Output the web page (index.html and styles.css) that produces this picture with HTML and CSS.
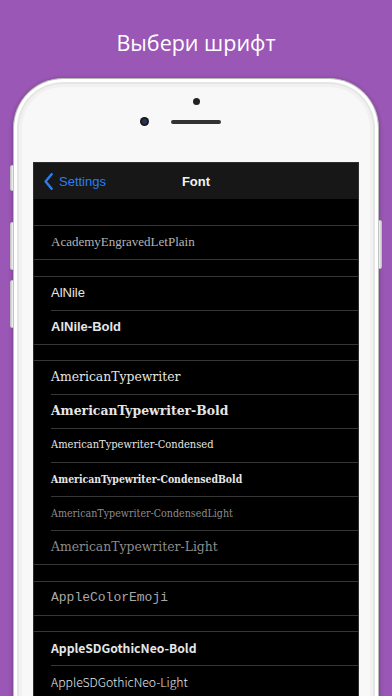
FILE: index.html
```html
<!DOCTYPE html>
<html lang="ru">
  <head>
    <meta charset="UTF-8" />
    <meta name="viewport" content="width=device-width, initial-scale=1.0" />
    <title>Выбери шрифт</title>
    <link rel="stylesheet" href="styles.css">
  </head>

  <body>
    <h1 class="title">Выбери шрифт</h1>

    <div class="phone">
      <!-- боковые кнопки -->
      <span class="side-btn mute"></span>
      <span class="side-btn vol-up"></span>
      <span class="side-btn vol-down"></span>
      <span class="side-btn power"></span>

      <div class="phone-top">
        <div class="sensor"></div>
        <div class="lens-row">
          <div class="lens"></div>
          <div class="grille"></div>
          <div class="lens-spacer"></div>
        </div>
      </div>

      <div class="screen">
        <div class="navbar">
          <div class="back">
            <svg width="9" height="17" viewBox="0 0 9 17">
              <path d="M7.6 1.2 L1.6 8.5 L7.6 15.8" fill="none" stroke="#2c7ef0" stroke-width="2.4" stroke-linecap="round" stroke-linejoin="round" />
            </svg>
            <span>Settings</span>
          </div>
          <div class="nav-title">Font</div>
          <div></div>
        </div>

        <div class="list">
          <div class="group first">
            <div class="row academy">AcademyEngravedLetPlain</div>
          </div>

          <div class="group">
            <div class="row nile">AlNile</div>
            <div class="row nile bold">AlNile-Bold</div>
          </div>

          <div class="group">
            <div class="row typewriter">AmericanTypewriter</div>
            <div class="row typewriter bold">AmericanTypewriter-Bold</div>
            <div class="row typewriter condensed">AmericanTypewriter-Condensed</div>
            <div class="row typewriter condensed bold">AmericanTypewriter-CondensedBold</div>
            <div class="row typewriter condensed light">AmericanTypewriter-CondensedLight</div>
            <div class="row typewriter light">AmericanTypewriter-Light</div>
          </div>

          <div class="group">
            <div class="row emoji">AppleColorEmoji</div>
          </div>

          <div class="group">
            <div class="row gothic bold">AppleSDGothicNeo-Bold</div>
            <div class="row gothic thin">AppleSDGothicNeo-Light</div>
            <div class="row gothic">AppleSDGothicNeo-Medium</div>
          </div>
        </div>
      </div>
    </div>
  </body>
</html>
```

FILE: styles.css
```css
/* фон страницы */
body {
  margin: 0;
  width: 392px;
  height: 696px;
  overflow: hidden;
  background: #9a57b5;
  font-family: "Liberation Sans", Arial, sans-serif;
}

.title {
  margin: 0;
  padding-top: 28px;
  height: 48px;
  box-sizing: border-box;
  text-align: center;
  font-family: "Open Sans", "Noto Sans", sans-serif;
  font-size: 21.5px;
  font-weight: 400;
  line-height: 30px;
  color: #ffffff;
}

/* корпус телефона */
.phone {
  position: relative;
  margin: 30px 13px 0;
  height: 700px;
  background: #f8f8f8;
  border: 1px solid #b9b9b9;
  border-bottom: none;
  border-radius: 50px 50px 0 0;
  box-shadow: inset 0 0 0 3px #ffffff, inset 0 0 0 5px #e6e6e6,
    inset 0 0 0 8px #f1f1f1, 0 1px 4px rgba(0, 0, 0, 0.3);
}

.side-btn {
  position: absolute;
  width: 2px;
  background: linear-gradient(90deg, #d0d0d0, #f4f4f4);
  border: 1px solid #c4c4c4;
  border-radius: 2px 0 0 2px;
}

.mute {
  left: -4px;
  top: 86px;
  height: 24px;
}

.vol-up {
  left: -4px;
  top: 143px;
  height: 46px;
}

.vol-down {
  left: -4px;
  top: 201px;
  height: 46px;
}

.power {
  right: -4px;
  top: 141px;
  height: 47px;
  border-radius: 0 2px 2px 0;
  background: linear-gradient(90deg, #f4f4f4, #d0d0d0);
}

/* верх телефона */
.phone-top {
  height: 83px;
  display: flex;
  flex-direction: column;
  align-items: center;
}

.sensor {
  margin-top: 19px;
  width: 7px;
  height: 7px;
  border-radius: 50%;
  background: #222;
}

.lens-row {
  margin-top: 12px;
  display: flex;
  align-items: center;
  gap: 22px;
}

.lens {
  width: 9px;
  height: 9px;
  border-radius: 50%;
  background: radial-gradient(circle, #27345a 0 30%, #151515 55%);
}

.lens-spacer {
  width: 9px;
  height: 9px;
}

.grille {
  width: 50px;
  height: 4px;
  border-radius: 2px;
  background: #333333;
}

/* экран */
.screen {
  margin: 0 19px;
  height: 600px;
  background: #000;
  border: 1px solid #2e2e2e;
  border-bottom: none;
}

.navbar {
  height: 36px;
  background: #171717;
  display: grid;
  grid-template-columns: 1fr auto 1fr;
  align-items: center;
}

.back {
  display: flex;
  align-items: center;
  gap: 6px;
  padding-left: 10px;
  color: #2c7ef0;
  font-size: 13px;
}

.nav-title {
  color: #f2f2f2;
  font-size: 13px;
  font-weight: bold;
}

/* список шрифтов */
.list {
  padding-top: 26px;
}

.group {
  margin-top: 15.5px;
  border-top: 1px solid #363636;
  border-bottom: 1px solid #363636;
}

.group.first {
  margin-top: 0;
}

.row {
  height: 33px;
  margin-left: 17px;
  display: flex;
  align-items: center;
  padding-bottom: 2px;
  box-sizing: border-box;
  color: #e6e6e6;
  font-size: 13px;
  white-space: nowrap;
}

.row + .row {
  border-top: 1px solid #363636;
  height: 34px;
}

.bold {
  font-weight: bold;
}

.academy {
  font-family: "Liberation Serif", serif;
  font-size: 13px;
  color: #b4b4b4;
}

.nile {
  font-family: "Liberation Sans", Arial, sans-serif;
}

.typewriter {
  font-family: "DejaVu Serif", serif;
  font-size: 12.4px;
}

.typewriter.condensed {
  font-family: "DejaVu Serif Condensed", "DejaVu Serif", serif;
  font-stretch: condensed;
  font-size: 11px;
}

.typewriter.condensed.bold {
  font-size: 10.4px;
}

.typewriter.condensed.light {
  font-size: 10.6px;
}

.typewriter.light {
  color: #8c8c8c;
}

.emoji {
  font-family: "Liberation Mono", monospace;
  font-size: 13px;
  color: #a8a8a8;
}

.gothic {
  font-family: "Noto Sans CJK KR", "Noto Sans", sans-serif;
  font-size: 12.2px;
}

.gothic.thin {
  font-weight: 300;
}
```
